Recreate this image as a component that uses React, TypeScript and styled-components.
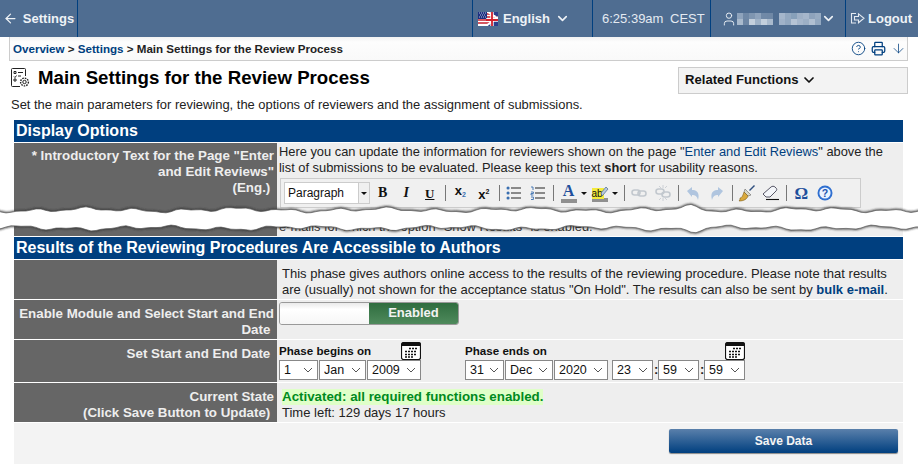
import React from "react";
import styled, { createGlobalStyle } from "styled-components";
import { ArrowLeft, ChevronDown, CircleHelp, Printer, ArrowDown, User } from "lucide-react";

const GlobalStyle = createGlobalStyle`
  html, body {
    margin: 0;
    padding: 0;
    background: #fff;
    font-family: "Liberation Sans", Arial, sans-serif;
    font-size: 13px;
    color: #111;
  }
`;

const selectChevron =
  "url(\"data:image/svg+xml,%3Csvg xmlns='http://www.w3.org/2000/svg' width='10' height='6'%3E%3Cpath d='M1 1l4 4 4-4' fill='none' stroke='%23555' stroke-width='1'/%3E%3C/svg%3E\")";

// the "torn paper" edge that cuts the screenshot in two
function tornEdge(base: number, phase: number, dip: number) {
  const pts: string[] = [];
  for (let x = -4; x <= 924; x += 5) {
    const wob =
      1.4 * Math.sin(x / 8 + phase) +
      1.1 * Math.sin(x / 23 + phase * 2) +
      0.7 * Math.sin(x / 3.7 + phase);
    const peak = dip * Math.exp(-((x - 692) * (x - 692)) / 120);
    pts.push(`${x} ${(base + wob + peak).toFixed(1)}`);
  }
  return pts;
}

const topEdge = tornEdge(10, 0.4, -3);
const bottomEdge = tornEdge(28, 2.1, 3);
const tearFill = `M${topEdge.join(" L")} L${[...bottomEdge].reverse().join(" L")} Z`;

const nameBlocks = [
  [0, 3, "#8ea3bc"], [6, 3, "#6f88a6"], [12, 3, "#7f96b1"], [18, 3, "#8ea3bc"], [24, 3, "#7089a7"], [30, 3, "#6f88a6"],
  [42, 3, "#a5b6cb"], [48, 3, "#93a8c0"], [54, 3, "#87a0ba"], [60, 3, "#9eb0c6"], [66, 3, "#a5b6cb"], [72, 3, "#8ea3bc"], [78, 3, "#97abc2"],
  [0, 9, "#a9bacd"], [6, 9, "#6d86a4"], [12, 9, "#c3cfdc"], [18, 9, "#9fb2c7"], [24, 9, "#c3cfdc"], [30, 9, "#a9bacd"],
  [42, 9, "#a0b2c8"], [48, 9, "#93a8c0"], [54, 9, "#b5c3d4"], [60, 9, "#a5b6cb"], [66, 9, "#9cafc5"], [72, 9, "#b0bfd1"], [78, 9, "#93a8c0"],
] as const;

const Page = styled.div`
  position: relative;
  width: 918px;
  height: 464px;
  overflow: hidden;
`;

const Header = styled.header`
  display: flex;
  height: 37px;
  background: #4f6d91;
  color: #fff;
`;

const NavItem = styled.div<{ $w: number; $first?: boolean; $pad?: number; $gap?: number }>`
  width: ${(p) => p.$w}px;
  display: flex;
  align-items: center;
  justify-content: ${(p) => (p.$pad === undefined ? "center" : "flex-start")};
  gap: ${(p) => p.$gap ?? 5}px;
  box-sizing: border-box;
  padding-left: ${(p) => p.$pad ?? 0}px;
  border-left: ${(p) => (p.$first ? "0" : "1px solid #003f7f")};
  font-weight: bold;
  font-size: 13px;
  color: #eef2f6;
`;

const Spacer = styled.div`
  flex: 1;
  border-left: 1px solid #003f7f;
`;

const Clock = styled.span`
  font-weight: normal;
  font-size: 13px;
  word-spacing: 3px;
  color: #e4eaf1;
`;

const Crumbs = styled.nav`
  display: flex;
  align-items: center;
  justify-content: space-between;
  height: 23px;
  margin: 0 10px 0 9px;
  padding: 0 1px 0 3px;
  border: 1px solid #ccc;
  border-top: 0;
  background: linear-gradient(#f2f2f2 0, #fdfdfd 5px, #f9f9f9);
  font-size: 11.6px;
  font-weight: bold;
  color: #222;
`;

const CrumbLink = styled.a`
  color: #003f7f;
`;

const CrumbTools = styled.div`
  display: flex;
  align-items: center;
  gap: 5px;
  color: #003f7f;
`;

const TitleRow = styled.div`
  display: flex;
  justify-content: space-between;
  align-items: flex-start;
  margin: 6px 10px 0 11px;
`;

const TitleText = styled.div`
  display: flex;
  align-items: center;
  gap: 8px;
`;

const Title = styled.h1`
  margin: 0;
  font-size: 18.67px;
  line-height: 22px;
  font-weight: bold;
  color: #000;
`;

const Related = styled.div`
  display: flex;
  align-items: center;
  gap: 2px;
  box-sizing: border-box;
  width: 230px;
  height: 27px;
  padding: 0 0 2px 6px;
  background: #f3f3f3;
  border: 1px solid #ccc;
  font-size: 13.1px;
  font-weight: bold;
  color: #111;
`;

const Lead = styled.p`
  margin: 3px 0 7px 11px;
  font-size: 12.95px;
  line-height: 16px;
  color: #222;
`;

const Sheet = styled.div`
  width: 889px;
  margin-left: 14px;
  display: flex;
  flex-direction: column;
`;

const SectionHead = styled.h2`
  margin: 0 0 1px;
  height: 22px;
  padding-left: 2px;
  background: #003f7f;
  color: #fff;
  font-size: 16px;
  line-height: 21px;
  font-weight: bold;
`;

const Row = styled.div<{ $h: number }>`
  display: grid;
  grid-template-columns: 263px 1fr;
  height: ${(p) => p.$h}px;
  margin-bottom: 1px;
`;

const Label = styled.div<{ $top?: number }>`
  background: #666;
  color: #eee;
  font-weight: bold;
  font-size: 13.33px;
  line-height: 16px;
  text-align: right;
  padding: ${(p) => p.$top ?? 6}px 3px 0 0;
`;

const Cell = styled.div<{ $pad?: number; $top?: number }>`
  background: #eee;
  padding: ${(p) => p.$top ?? 6}px 4px 0 ${(p) => p.$pad ?? 2}px;
  overflow: hidden;
  line-height: 16px;
  font-size: 13px;
  color: #222;
`;

const IntroCell = styled(Cell)`
  display: flex;
  flex-direction: column;
  font-size: 12.87px;
`;

const IntroFoot = styled.div`
  margin-top: auto;
  padding-bottom: 1px;
  color: #333;
`;

const TextLink = styled.a`
  color: #003f7f;
`;

const StrongLink = styled.a`
  color: #003f7f;
  font-weight: bold;
`;

const Toolbar = styled.div`
  display: flex;
  align-items: center;
  box-sizing: border-box;
  width: 581px;
  height: 30px;
  margin: 2px 0 0 1px;
  padding: 0 0 0 3px;
  border: 1px solid #ccc;
  background: #f0f0f0;
  flex: none;
`;

const FormatBox = styled.div`
  box-sizing: border-box;
  display: flex;
  width: 86px;
  height: 22px;
  margin-right: 1px;
  border: 1px solid #ccc;
  background: #fff;
  font-size: 12px;
  line-height: 20px;
  color: #111;
`;

const FormatName = styled.span`
  flex: 1;
  padding-left: 3px;
`;

const FormatArrow = styled.span`
  width: 10px;
  display: flex;
  align-items: center;
  justify-content: center;
  background: #f0f0f0;
  border-left: 1px solid #ccc;
`;

const Caret = styled.span`
  display: block;
  width: 0;
  height: 0;
  border: 3px solid transparent;
  border-top: 3px solid #111;
  border-bottom: 0;
`;

const Tool = styled.span<{ $muted?: boolean }>`
  display: flex;
  align-items: center;
  justify-content: center;
  width: 23.5px;
  height: 24px;
  flex: none;
  opacity: ${(p) => (p.$muted ? 0.35 : 1)};
`;

const Glyph = styled.span<{ $c?: string; $size?: number; $u?: boolean; $i?: boolean }>`
  font-family: "Liberation Serif", serif;
  font-weight: bold;
  font-size: ${(p) => p.$size ?? 14}px;
  line-height: 1;
  color: ${(p) => p.$c ?? "#111"};
  font-style: ${(p) => (p.$i ? "italic" : "normal")};
  text-decoration: ${(p) => (p.$u ? "underline" : "none")};
`;

const ScriptGlyph = styled.span`
  font-family: "Liberation Sans", sans-serif;
  font-weight: bold;
  font-size: 13px;
  color: #111;
`;

const ScriptMark = styled.span<{ $up?: boolean }>`
  font-size: 7px;
  color: ${(p) => (p.$up ? "#111" : "#3a6fb0")};
  vertical-align: ${(p) => (p.$up ? "5px" : "-2px")};
`;

const ToolSep = styled.span`
  width: 1px;
  height: 16px;
  margin: 0 3px;
  flex: none;
  background: #777;
`;

const ColorTool = styled.span<{ $ml: number }>`
  display: flex;
  flex-direction: column;
  align-items: center;
  width: 16px;
  margin-left: ${(p) => p.$ml}px;
`;

const ColorBar = styled.span`
  display: block;
  width: 16px;
  height: 4px;
  background: #909090;
`;

const Marker = styled.span`
  position: relative;
  display: block;
  width: 16px;
  height: 13px;
`;

const MarkerText = styled.span`
  display: inline-block;
  font-family: "Liberation Sans", sans-serif;
  font-size: 10px;
  line-height: 11px;
  color: #111;
  background: #f3ea3c;
  padding: 0 1px 0 0;
`;

const MarkerPen = styled.svg`
  position: absolute;
  right: -1px;
  top: 1px;
`;

const SmallCaret = styled.span`
  margin: 0 3px 0 4px;
  display: flex;
`;

const ToggleTrack = styled.div`
  display: flex;
  box-sizing: border-box;
  width: 180px;
  height: 23px;
  border: 1px solid #999;
  border-radius: 3px;
  overflow: hidden;
`;

const ToggleOff = styled.div`
  width: 89px;
  background: linear-gradient(#eaeaea, #fff 30%, #f6f6f6);
`;

const ToggleOn = styled.div`
  flex: 1;
  background: linear-gradient(#2f6d3f, #4f8a5c);
  color: #f2f2f2;
  font-size: 13px;
  line-height: 20px;
  font-weight: bold;
  text-align: center;
`;

const Dates = styled.div`
  display: flex;
  gap: 44px;
`;

const DateGroup = styled.div`
  display: flex;
  flex-direction: column;
`;

const DateHead = styled.div`
  display: flex;
  justify-content: space-between;
  align-items: flex-end;
  height: 18px;
  font-weight: bold;
  font-size: 11.6px;
  line-height: 16px;
  color: #111;
`;

const DateHeadText = styled.span`
  margin-bottom: 1px;
`;

const Selects = styled.div`
  display: flex;
  align-items: center;
  gap: 1px;
`;

const Colon = styled.span`
  font-weight: bold;
  width: 3px;
  text-align: center;
`;

const Pick = styled.select<{ $w: number; $ml?: number }>`
  width: ${(p) => p.$w}px;
  height: 20px;
  margin-left: ${(p) => p.$ml ?? 0}px;
  padding: 0 0 0 4px;
  border: 1px solid #888;
  border-radius: 0;
  appearance: none;
  background: #fff ${selectChevron} no-repeat right 4px center;
  font-family: "Liberation Sans", sans-serif;
  font-size: 12.5px;
  color: #111;
`;

const Good = styled.span`
  display: inline-block;
  background: #dfffc8;
  color: #008a1e;
  font-weight: bold;
  font-size: 13.33px;
`;

const Footer = styled.div`
  display: flex;
  justify-content: flex-end;
  padding: 6px 5px 0 0;
  height: 41px;
  box-sizing: border-box;
  background: #f3f3f3;
`;

const SaveButton = styled.button`
  width: 229px;
  height: 24px;
  border: 0;
  border-radius: 2px;
  background: linear-gradient(#5a80ab, #003f7f);
  box-shadow: 0 1px 1px #888;
  color: #f4f4f4;
  font-family: "Liberation Sans", sans-serif;
  font-size: 12px;
  font-weight: bold;
`;

const TearLayer = styled.svg`
  position: absolute;
  left: 0;
  top: 200px;
  width: 918px;
  height: 40px;
`;

function Flag() {
  return (
    <svg width="20" height="14" viewBox="0 0 20 14">
      <rect width="20" height="14" fill="#fff" />
      <path d="M0 2h20M0 5h20M0 8h20M0 11h20" stroke="#c8202c" strokeWidth="1.3" />
      <path d="M0 0h9v7H0z" fill="#1c2f80" />
      <path d="M9 14 20 6v8zM11 0h9v5z" fill="#2b3f8c" />
      <path d="M8 14 20 5M10 0l10 7" stroke="#fff" strokeWidth="2" />
      <path d="M14 0v14M8 8h12" stroke="#fff" strokeWidth="3.4" />
      <path d="M14 0v14M8 8h12" stroke="#d2202c" strokeWidth="1.8" />
      <path d="M1 1h7M2 3h6M1 5h7" stroke="#dfe4f2" strokeWidth="0.8" strokeDasharray="1 1" />
    </svg>
  );
}

function Logout() {
  return (
    <svg width="15" height="15" viewBox="0 0 15 15" fill="none" stroke="#e4eaf1" strokeWidth="1.1">
      <path d="M6 2.5H1.5v9.5H6" />
      <path d="M4.5 5.5h4V2.8L14 7.3 8.5 11.8V9h-4z" />
    </svg>
  );
}

function SettingsList() {
  return (
    <svg width="19" height="20" viewBox="0 0 19 20" fill="none" stroke="#222" strokeWidth="1">
      <path d="M9 18.5H1.5a1 1 0 0 1-1-1V1.5a1 1 0 0 1 1-1h12a1 1 0 0 1 1 1V8" />
      <path d="M3 3.5h2v2H3zM3 11h2v2H3zM7 4.5h5M7 8h3M3 8.5l1 1 1.5-2" />
      <circle cx="13.5" cy="14" r="1.7" />
      <circle cx="13.5" cy="14" r="3.9" strokeWidth="1.4" strokeDasharray="1.6 1" />
    </svg>
  );
}

function CalendarIcon() {
  return (
    <svg width="20" height="18" viewBox="0 0 20 18">
      <rect x="0.5" y="0.5" width="19" height="17" rx="2" fill="#fff" stroke="#111" strokeWidth="1.2" />
      <rect x="1" y="1" width="18" height="3" fill="#111" />
      <path d="M8 6.5h2m1 0h2m1 0h2M4 9.5h2m1 0h2m1 0h2m1 0h2M4 12.5h2m1 0h2m1 0h2m1 0h2M4 15h2m1 0h2m1 0h2" stroke="#111" strokeWidth="1.6" />
    </svg>
  );
}

function BulletList({ numbered }: { numbered?: boolean }) {
  return (
    <svg width="16" height="14" viewBox="0 0 16 14" fill="none">
      <path d="M5 2h10M5 7h10M5 12h10" stroke="#222" strokeWidth="1" />
      {numbered ? (
        <path d="M1 1h2v3M1 6h2.4v1.5H1V9h2.4M1 11h2.4v2.5H1" stroke="#3a6fb0" strokeWidth="0.9" />
      ) : (
        <path d="M2 2h.1M2 7h.1M2 12h.1" stroke="#3a6fb0" strokeWidth="3" strokeLinecap="round" />
      )}
    </svg>
  );
}

function ChainIcon({ broken }: { broken?: boolean }) {
  return (
    <svg width="16" height="16" viewBox="0 0 16 16" fill="none" stroke="#6f7f90" strokeWidth="1.6">
      <rect x="1" y={broken ? 4 : 5} width="8" height="5" rx="2.5" />
      <rect x="7" y={broken ? 7 : 6} width="8" height="5" rx="2.5" />
      {broken && <path d="M8 0v3M12 1l-2 2M4 1l2 2M8 13v3M12 15l-2-2M4 15l2-2" strokeWidth="0.8" />}
    </svg>
  );
}

function UndoIcon({ redo }: { redo?: boolean }) {
  return (
    <svg width="15" height="15" viewBox="0 0 15 15" style={redo ? { transform: "scaleX(-1)" } : undefined}>
      <path d="M1 5 6 1v3c5 0 8 3 6 10-1-4-3-5-6-5v2z" fill="#3a78c0" />
    </svg>
  );
}

function BrushIcon() {
  return (
    <svg width="18" height="18" viewBox="0 0 18 18">
      <path d="M11 6 16 1l1 1-5 5z" fill="#2f4f7f" />
      <path d="M7 5l6 6-3 1-4-4z" fill="#d8d8c8" stroke="#555" strokeWidth="0.5" />
      <path d="M6 8l4 4c-1 3-4 5-9 5 1-1 1-2 1-3 2 0 3-3 4-6z" fill="#d9a93c" stroke="#7a5a18" strokeWidth="0.6" />
    </svg>
  );
}

function EraserIcon() {
  return (
    <svg width="18" height="16" viewBox="0 0 18 16" fill="none">
      <path d="M1 9 9 2c1-1 3-1 4 0l1 1c1 1 1 2 0 3l-6 6H4z" fill="#f4f6fa" stroke="#445" strokeWidth="0.9" />
      <path d="M4 14.5h13" stroke="#111" strokeWidth="1.1" />
    </svg>
  );
}

function HelpBadge() {
  return (
    <svg width="16" height="16" viewBox="0 0 16 16">
      <circle cx="8" cy="8" r="7.5" fill="#2f6fd0" />
      <circle cx="8" cy="8" r="5.6" fill="#eaf2ff" />
      <text x="8" y="11.6" textAnchor="middle" fontFamily="Liberation Sans" fontWeight="bold" fontSize="10.5" fill="#1d55b0">?</text>
    </svg>
  );
}

function PixelName() {
  return (
    <svg width="84" height="12" viewBox="0 0 84 12">
      {nameBlocks.map(([x, y, c]) => (
        <rect key={`${x}-${y}`} x={x} y={y - 3} width="6" height="6" fill={c} />
      ))}
    </svg>
  );
}

function Select({ value, w, ml }: { value: string; w: number; ml?: number }) {
  return (
    <Pick $w={w} $ml={ml} defaultValue={value}>
      <option>{value}</option>
    </Pick>
  );
}

export default function App() {
  return (
    <Page>
      <GlobalStyle />
      <Header>
        <NavItem $first $w={77}>
          <ArrowLeft size={15} strokeWidth={2} />
          Settings
        </NavItem>
        <Spacer />
        <NavItem $w={120} $pad={5}>
          <Flag />
          <span>English</span>
          <ChevronDown size={15} strokeWidth={2.6} />
        </NavItem>
        <NavItem $w={118} $pad={9}>
          <Clock>6:25:39am CEST</Clock>
        </NavItem>
        <NavItem $w={135} $pad={10} $gap={0}>
          <User size={16} strokeWidth={1.4} />
          <PixelName />
          <ChevronDown size={15} strokeWidth={2.6} />
        </NavItem>
        <NavItem $w={73} $pad={4} $gap={3}>
          <Logout />
          Logout
        </NavItem>
      </Header>

      <Crumbs>
        <span>
          <CrumbLink>Overview</CrumbLink> &gt; <CrumbLink>Settings</CrumbLink> &gt; Main Settings for the Review Process
        </span>
        <CrumbTools>
          <CircleHelp size={15} strokeWidth={1.4} />
          <Printer size={15} strokeWidth={2} />
          <ArrowDown size={15} strokeWidth={1.2} />
        </CrumbTools>
      </Crumbs>

      <TitleRow>
        <TitleText>
          <SettingsList />
          <Title>Main Settings for the Review Process</Title>
        </TitleText>
        <Related>
          Related Functions
          <ChevronDown size={16} strokeWidth={2.6} />
        </Related>
      </TitleRow>

      <Lead>Set the main parameters for reviewing, the options of reviewers and the assignment of submissions.</Lead>

      <Sheet>
        <SectionHead>Display Options</SectionHead>
        <Row $h={93}>
          <Label $top={5}>
            * Introductory Text for the Page "Enter and Edit Reviews"
            <br />
            (Eng.)&nbsp;
          </Label>
          <IntroCell $top={1}>
            <div>
              Here you can update the information for reviewers shown on the page "<TextLink>Enter and Edit Reviews</TextLink>" above the
              list of submissions to be evaluated. Please keep this text <b>short</b> for usability reasons.
            </div>
            <Toolbar>
              <FormatBox>
                <FormatName>Paragraph</FormatName>
                <FormatArrow>
                  <Caret />
                </FormatArrow>
              </FormatBox>
              <Tool><Glyph>B</Glyph></Tool>
              <Tool><Glyph $i>I</Glyph></Tool>
              <Tool><Glyph $u $size={13}>U</Glyph></Tool>
              <ToolSep />
              <Tool><ScriptGlyph>x<ScriptMark>2</ScriptMark></ScriptGlyph></Tool>
              <Tool><ScriptGlyph>x<ScriptMark $up>2</ScriptMark></ScriptGlyph></Tool>
              <ToolSep />
              <Tool><BulletList /></Tool>
              <Tool><BulletList numbered /></Tool>
              <ToolSep />
              <ColorTool $ml={4}>
                <Glyph $c="#1f4f9c" $size={16}>A</Glyph>
                <ColorBar />
              </ColorTool>
              <SmallCaret><Caret /></SmallCaret>
              <ColorTool $ml={2}>
                <Marker>
                  <MarkerText>ab</MarkerText>
                  <MarkerPen width="9" height="11" viewBox="0 0 9 11">
                    <path d="M2 10 1 7l5-6 2 2-5 6z" fill="#b8c8dc" stroke="#4a6a8a" strokeWidth="0.7" />
                  </MarkerPen>
                </Marker>
                <ColorBar />
              </ColorTool>
              <SmallCaret><Caret /></SmallCaret>
              <ToolSep />
              <Tool $muted><ChainIcon /></Tool>
              <Tool $muted><ChainIcon broken /></Tool>
              <ToolSep />
              <Tool $muted><UndoIcon /></Tool>
              <Tool $muted><UndoIcon redo /></Tool>
              <ToolSep />
              <Tool><BrushIcon /></Tool>
              <Tool><EraserIcon /></Tool>
              <ToolSep />
              <Tool><Glyph $c="#1f4f9c" $size={17}>Ω</Glyph></Tool>
              <Tool><HelpBadge /></Tool>
            </Toolbar>
            <IntroFoot>e-mails for which the option "Show Results" is enabled.</IntroFoot>
          </IntroCell>
        </Row>

        <SectionHead>Results of the Reviewing Procedures Are Accessible to Authors</SectionHead>
        <Row $h={39}>
          <Label />
          <Cell $pad={5}>
            This phase gives authors online access to the results of the reviewing procedure. Please note that results
            are (usually) not shown for the acceptance status "On Hold". The results can also be sent by <StrongLink>bulk e-mail</StrongLink>.
          </Cell>
        </Row>
        <Row $h={39}>
          <Label>Enable Module and Select Start and End Date&nbsp;</Label>
          <Cell $top={2}>
            <ToggleTrack>
              <ToggleOff />
              <ToggleOn>Enabled</ToggleOn>
            </ToggleTrack>
          </Cell>
        </Row>
        <Row $h={42}>
          <Label>Set Start and End Date&nbsp;</Label>
          <Cell $top={2}>
            <Dates>
              <DateGroup>
                <DateHead>
                  <DateHeadText>Phase begins on</DateHeadText>
                  <CalendarIcon />
                </DateHead>
                <Selects>
                  <Select value="1" w={39} />
                  <Select value="Jan" w={47} />
                  <Select value="2009" w={54} />
                </Selects>
              </DateGroup>
              <DateGroup>
                <DateHead>
                  <DateHeadText>Phase ends on</DateHeadText>
                  <CalendarIcon />
                </DateHead>
                <Selects>
                  <Select value="31" w={39} />
                  <Select value="Dec" w={48} />
                  <Select value="2020" w={54} />
                  <Select value="23" w={41} ml={3} />
                  <Colon>:</Colon>
                  <Select value="59" w={41} />
                  <Colon>:</Colon>
                  <Select value="59" w={41} />
                </Selects>
              </DateGroup>
            </Dates>
          </Cell>
        </Row>
        <Row $h={39}>
          <Label>
            Current State
            <br />
            (Click Save Button to Update)&nbsp;
          </Label>
          <Cell $pad={5}>
            <Good>Activated: all required functions enabled.</Good>
            <br />
            Time left: 129 days 17 hours
          </Cell>
        </Row>
        <Footer>
          <SaveButton>Save Data</SaveButton>
        </Footer>
      </Sheet>

      <TearLayer viewBox="0 0 918 40">
        <defs>
          <filter id="tearBlur" x="-5%" y="-40%" width="110%" height="180%">
            <feGaussianBlur stdDeviation="0.9" />
          </filter>
        </defs>
        <path d={`M${topEdge.join(" L")}`} fill="none" stroke="#333" strokeWidth="1.8" filter="url(#tearBlur)" />
        <path d={`M${bottomEdge.join(" L")}`} fill="none" stroke="#333" strokeWidth="1.8" filter="url(#tearBlur)" />
        <path d={tearFill} fill="#fff" />
        <path d={`M${topEdge.join(" L")}`} fill="none" stroke="#555" strokeWidth="0.7" />
        <path d={`M${bottomEdge.join(" L")}`} fill="none" stroke="#555" strokeWidth="0.7" />
      </TearLayer>
    </Page>
  );
}
